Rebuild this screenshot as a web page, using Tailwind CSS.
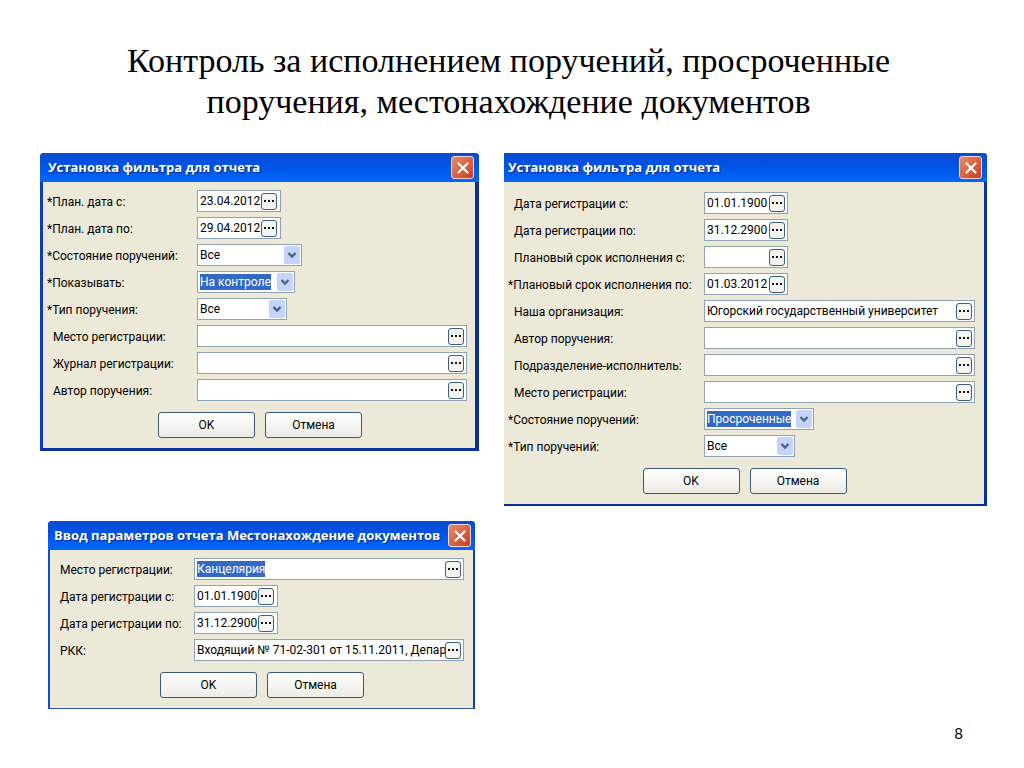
<!DOCTYPE html>
<html lang="ru">
<head>
    <meta charset="UTF-8">
    <title>Контроль за исполнением поручений</title>
    <meta name="viewport" content="width=device-width, initial-scale=1.0">
    <script src="https://cdn.jsdelivr.net/npm/@tailwindcss/browser@4"></script>
</head>
<body class="bg-white min-h-screen flex flex-col text-black text-[12px] font-['Roboto','DejaVu_Sans_Condensed',sans-serif]">

<!-- shared icons -->
<svg class="hidden">
    <symbol id="dots" viewBox="0 0 12 12"><path d="M1 5h2v2H1zM5 5h2v2H5zM9 5h2v2H9z" fill="#111"/></symbol>
    <symbol id="chevron" viewBox="0 0 12 12"><path d="M2.5 4L6 7.5 9.5 4" fill="none" stroke="#4d6185" stroke-width="2.4"/></symbol>
    <symbol id="cross" viewBox="0 0 16 16"><path d="M3.5 3.5l9 9M12.5 3.5l-9 9" fill="none" stroke="#fff" stroke-width="2.2" stroke-linecap="round"/></symbol>
</svg>

<h1 class="pt-10 px-24 pr-[103px] text-center text-[34px] leading-[41px] font-['Liberation_Serif',serif]">Контроль за исполнением поручений, просроченные поручения, местонахождение документов</h1>

<main class="grow pt-[31px] pl-10 pr-[37px] grid grid-cols-[439fr_483fr] gap-x-[25px] items-start">

    <div class="flex flex-col gap-[70px]">
        <section class="border-l-3 border-r-4 border-b-3 border-[#0b3bc4] border-r-[#0a2f9e] border-b-[#0a2f9e] rounded-t-sm bg-[#ece9d8]">
            <header class="-ml-[3px] -mr-1 h-[29px] pl-2 pr-[5px] flex items-center justify-between rounded-t-sm bg-linear-to-b from-[#0a4bd0] via-[#0054e9] to-[#0566fd]">
                <h2 class="text-white text-[13px] font-bold font-['Open_Sans',sans-serif] text-shadow-[1px_1px_1px_#0a2f7e]">Установка фильтра для отчета</h2>
                <button type="button" aria-label="Закрыть" class="size-[23px] grid place-items-center rounded-[3px] border border-[#f3d6d6] bg-linear-to-br from-[#e98a6a] to-[#c93a14]"><svg class="size-4"><use href="#cross"/></svg></button>
            </header>
            <form class="pt-2 pb-[10px] pl-[10px] pr-2">
                <div class="grid grid-cols-[144px_1fr] gap-y-[5px] items-center justify-items-start [&>label]:pt-0.5">
                    <label for="a1" class="-ml-[6px]">*План. дата с:</label>
                    <div class="w-[84px] h-[22px] pl-0.5 pr-[3px] flex items-center border border-[#8fa3b5] bg-white">
                        <input id="a1" value="23.04.2012" class="min-w-0 grow">
                        <button type="button" aria-label="Выбрать" class="shrink-0 w-4 h-[17px] grid place-items-center rounded-[3px] border border-[#3e5f7d] bg-[#f3f3ef]"><svg class="size-3"><use href="#dots"/></svg></button>
                    </div>
                    <label for="a2" class="-ml-[6px]">*План. дата по:</label>
                    <div class="w-[84px] h-[22px] pl-0.5 pr-[3px] flex items-center border border-[#8fa3b5] bg-white">
                        <input id="a2" value="29.04.2012" class="min-w-0 grow">
                        <button type="button" aria-label="Выбрать" class="shrink-0 w-4 h-[17px] grid place-items-center rounded-[3px] border border-[#3e5f7d] bg-[#f3f3ef]"><svg class="size-3"><use href="#dots"/></svg></button>
                    </div>
                    <label for="a3" class="-ml-[6px]">*Состояние поручений:</label>
                    <div class="w-[105px] h-[22px] pl-0.5 pr-px flex items-center justify-between border border-[#8fa3b5] bg-white">
                        <select id="a3" class="appearance-none grow"><option>Все</option></select>
                        <span class="w-4 h-[18px] grid place-items-center rounded-xs bg-[#c3d3fb] pointer-events-none"><svg class="size-3"><use href="#chevron"/></svg></span>
                    </div>
                    <label for="a4" class="-ml-[6px]">*Показывать:</label>
                    <div class="w-[98px] h-[22px] pl-0.5 pr-px flex items-center justify-between border border-[#8fa3b5] bg-white">
                        <select id="a4" class="appearance-none field-sizing-content h-4 leading-4 bg-[#316ac5] text-white"><option>На контроле</option></select>
                        <span class="w-4 h-[18px] grid place-items-center rounded-xs bg-[#c3d3fb] pointer-events-none"><svg class="size-3"><use href="#chevron"/></svg></span>
                    </div>
                    <label for="a5" class="-ml-[6px]">*Тип поручения:</label>
                    <div class="w-[90px] h-[22px] pl-0.5 pr-px flex items-center justify-between border border-[#8fa3b5] bg-white">
                        <select id="a5" class="appearance-none grow"><option>Все</option></select>
                        <span class="w-4 h-[18px] grid place-items-center rounded-xs bg-[#c3d3fb] pointer-events-none"><svg class="size-3"><use href="#chevron"/></svg></span>
                    </div>
                    <label for="a6">Место регистрации:</label>
                    <div class="w-full h-[22px] pl-0.5 pr-[2px] flex items-center border border-[#8fa3b5] bg-white">
                        <input id="a6" class="min-w-0 grow">
                        <button type="button" aria-label="Выбрать" class="shrink-0 w-4 h-[17px] grid place-items-center rounded-[3px] border border-[#3e5f7d] bg-[#f3f3ef]"><svg class="size-3"><use href="#dots"/></svg></button>
                    </div>
                    <label for="a7">Журнал регистрации:</label>
                    <div class="w-full h-[22px] pl-0.5 pr-[2px] flex items-center border border-[#8fa3b5] bg-white">
                        <input id="a7" class="min-w-0 grow">
                        <button type="button" aria-label="Выбрать" class="shrink-0 w-4 h-[17px] grid place-items-center rounded-[3px] border border-[#3e5f7d] bg-[#f3f3ef]"><svg class="size-3"><use href="#dots"/></svg></button>
                    </div>
                    <label for="a8">Автор поручения:</label>
                    <div class="w-full h-[22px] pl-0.5 pr-[2px] flex items-center border border-[#8fa3b5] bg-white">
                        <input id="a8" class="min-w-0 grow">
                        <button type="button" aria-label="Выбрать" class="shrink-0 w-4 h-[17px] grid place-items-center rounded-[3px] border border-[#3e5f7d] bg-[#f3f3ef]"><svg class="size-3"><use href="#dots"/></svg></button>
                    </div>
                </div>
                <div class="mt-[11px] flex justify-center gap-[10px]">
                    <button type="submit" class="w-[97px] h-[26px] rounded-[3px] border border-[#3b5a78] bg-linear-to-b from-white to-[#ecebe6]">OK</button>
                    <button type="button" class="w-[97px] h-[26px] rounded-[3px] border border-[#3b5a78] bg-linear-to-b from-white to-[#ecebe6]">Отмена</button>
                </div>
            </form>
        </section>

        <section class="ml-2 mr-1 border-x-2 border-b border-[#0b4fd0] border-r-[#0a3fae] border-b-[#2c5a9e] rounded-t-sm bg-[#ece9d8]">
            <header class="-mx-0.5 h-[29px] pl-[6px] pr-1 flex items-center justify-between rounded-t-sm bg-linear-to-b from-[#0a4bd0] via-[#0054e9] to-[#0566fd]">
                <h2 class="text-white text-[13px] font-bold font-['Open_Sans',sans-serif] text-shadow-[1px_1px_1px_#0a2f7e]">Ввод параметров отчета Местонахождение документов</h2>
                <button type="button" aria-label="Закрыть" class="size-[23px] grid place-items-center rounded-[3px] border border-[#f3d6d6] bg-linear-to-br from-[#e98a6a] to-[#c93a14]"><svg class="size-4"><use href="#cross"/></svg></button>
            </header>
            <form class="pt-2 pb-[10px] pl-[10px] pr-[9px]">
                <div class="grid grid-cols-[134px_1fr] gap-y-[5px] items-center justify-items-start [&>label]:pt-0.5">
                    <label for="b1">Место регистрации:</label>
                    <div class="w-full h-[22px] pl-0.5 pr-[2px] flex items-center justify-between border border-[#8fa3b5] bg-white">
                        <input id="b1" value="Канцелярия" class="field-sizing-content h-4 leading-4 bg-[#316ac5] text-white">
                        <button type="button" aria-label="Выбрать" class="shrink-0 w-4 h-[17px] grid place-items-center rounded-[3px] border border-[#3e5f7d] bg-[#f3f3ef]"><svg class="size-3"><use href="#dots"/></svg></button>
                    </div>
                    <label for="b2">Дата регистрации с:</label>
                    <div class="w-[84px] h-[22px] pl-0.5 pr-[3px] flex items-center border border-[#8fa3b5] bg-white">
                        <input id="b2" value="01.01.1900" class="min-w-0 grow">
                        <button type="button" aria-label="Выбрать" class="shrink-0 w-4 h-[17px] grid place-items-center rounded-[3px] border border-[#3e5f7d] bg-[#f3f3ef]"><svg class="size-3"><use href="#dots"/></svg></button>
                    </div>
                    <label for="b3">Дата регистрации по:</label>
                    <div class="w-[84px] h-[22px] pl-0.5 pr-[3px] flex items-center border border-[#8fa3b5] bg-white">
                        <input id="b3" value="31.12.2900" class="min-w-0 grow">
                        <button type="button" aria-label="Выбрать" class="shrink-0 w-4 h-[17px] grid place-items-center rounded-[3px] border border-[#3e5f7d] bg-[#f3f3ef]"><svg class="size-3"><use href="#dots"/></svg></button>
                    </div>
                    <label for="b4">РКК:</label>
                    <div class="w-full h-[22px] pl-0.5 pr-[2px] flex items-center border border-[#8fa3b5] bg-white">
                        <input id="b4" value="Входящий № 71-02-301 от 15.11.2011, Департамент" class="min-w-0 grow">
                        <button type="button" aria-label="Выбрать" class="shrink-0 w-4 h-[17px] grid place-items-center rounded-[3px] border border-[#3e5f7d] bg-[#f3f3ef]"><svg class="size-3"><use href="#dots"/></svg></button>
                    </div>
                </div>
                <div class="mt-[11px] flex justify-center gap-[10px]">
                    <button type="submit" class="w-[97px] h-[26px] rounded-[3px] border border-[#3b5a78] bg-linear-to-b from-white to-[#ecebe6]">OK</button>
                    <button type="button" class="w-[97px] h-[26px] rounded-[3px] border border-[#3b5a78] bg-linear-to-b from-white to-[#ecebe6]">Отмена</button>
                </div>
            </form>
        </section>
    </div>

    <section class="border-r-3 border-b-2 border-[#0a2f9e] rounded-tr-sm bg-[#ece9d8]">
        <header class="-mr-[3px] h-[29px] pl-1 pr-[5px] flex items-center justify-between rounded-tr-sm bg-linear-to-b from-[#0a4bd0] via-[#0054e9] to-[#0566fd]">
            <h2 class="text-white text-[13px] font-bold font-['Open_Sans',sans-serif] text-shadow-[1px_1px_1px_#0a2f7e]">Установка фильтра для отчета</h2>
            <button type="button" aria-label="Закрыть" class="size-[23px] grid place-items-center rounded-[3px] border border-[#f3d6d6] bg-linear-to-br from-[#e98a6a] to-[#c93a14]"><svg class="size-4"><use href="#cross"/></svg></button>
        </header>
        <form class="pt-[10px] pb-[10px] pl-[10px] pr-[9px]">
            <div class="grid grid-cols-[190px_1fr] gap-y-[5px] items-center justify-items-start [&>label]:pt-0.5">
                <label for="c1">Дата регистрации с:</label>
                <div class="w-[84px] h-[22px] pl-0.5 pr-[2px] flex items-center border border-[#8fa3b5] bg-white">
                    <input id="c1" value="01.01.1900" class="min-w-0 grow">
                    <button type="button" aria-label="Выбрать" class="shrink-0 w-4 h-[17px] grid place-items-center rounded-[3px] border border-[#3e5f7d] bg-[#f3f3ef]"><svg class="size-3"><use href="#dots"/></svg></button>
                </div>
                <label for="c2">Дата регистрации по:</label>
                <div class="w-[84px] h-[22px] pl-0.5 pr-[2px] flex items-center border border-[#8fa3b5] bg-white">
                    <input id="c2" value="31.12.2900" class="min-w-0 grow">
                    <button type="button" aria-label="Выбрать" class="shrink-0 w-4 h-[17px] grid place-items-center rounded-[3px] border border-[#3e5f7d] bg-[#f3f3ef]"><svg class="size-3"><use href="#dots"/></svg></button>
                </div>
                <label for="c3">Плановый срок исполнения с:</label>
                <div class="w-[84px] h-[22px] pl-0.5 pr-[2px] flex items-center border border-[#8fa3b5] bg-white">
                    <input id="c3" class="min-w-0 grow">
                    <button type="button" aria-label="Выбрать" class="shrink-0 w-4 h-[17px] grid place-items-center rounded-[3px] border border-[#3e5f7d] bg-[#f3f3ef]"><svg class="size-3"><use href="#dots"/></svg></button>
                </div>
                <label for="c4" class="-ml-[6px]">*Плановый срок исполнения по:</label>
                <div class="w-[84px] h-[22px] pl-0.5 pr-[2px] flex items-center border border-[#8fa3b5] bg-white">
                    <input id="c4" value="01.03.2012" class="min-w-0 grow">
                    <button type="button" aria-label="Выбрать" class="shrink-0 w-4 h-[17px] grid place-items-center rounded-[3px] border border-[#3e5f7d] bg-[#f3f3ef]"><svg class="size-3"><use href="#dots"/></svg></button>
                </div>
                <label for="c5">Наша организация:</label>
                <div class="w-full h-[22px] pl-0.5 pr-[2px] flex items-center border border-[#8fa3b5] bg-white">
                    <input id="c5" value="Югорский государственный университет" class="min-w-0 grow">
                    <button type="button" aria-label="Выбрать" class="shrink-0 w-4 h-[17px] grid place-items-center rounded-[3px] border border-[#3e5f7d] bg-[#f3f3ef]"><svg class="size-3"><use href="#dots"/></svg></button>
                </div>
                <label for="c6">Автор поручения:</label>
                <div class="w-full h-[22px] pl-0.5 pr-[2px] flex items-center border border-[#8fa3b5] bg-white">
                    <input id="c6" class="min-w-0 grow">
                    <button type="button" aria-label="Выбрать" class="shrink-0 w-4 h-[17px] grid place-items-center rounded-[3px] border border-[#3e5f7d] bg-[#f3f3ef]"><svg class="size-3"><use href="#dots"/></svg></button>
                </div>
                <label for="c7">Подразделение-исполнитель:</label>
                <div class="w-full h-[22px] pl-0.5 pr-[2px] flex items-center border border-[#8fa3b5] bg-white">
                    <input id="c7" class="min-w-0 grow">
                    <button type="button" aria-label="Выбрать" class="shrink-0 w-4 h-[17px] grid place-items-center rounded-[3px] border border-[#3e5f7d] bg-[#f3f3ef]"><svg class="size-3"><use href="#dots"/></svg></button>
                </div>
                <label for="c8">Место регистрации:</label>
                <div class="w-full h-[22px] pl-0.5 pr-[2px] flex items-center border border-[#8fa3b5] bg-white">
                    <input id="c8" class="min-w-0 grow">
                    <button type="button" aria-label="Выбрать" class="shrink-0 w-4 h-[17px] grid place-items-center rounded-[3px] border border-[#3e5f7d] bg-[#f3f3ef]"><svg class="size-3"><use href="#dots"/></svg></button>
                </div>
                <label for="c9" class="-ml-[6px]">*Состояние поручений:</label>
                <div class="w-[110px] h-[22px] pl-0.5 pr-px flex items-center justify-between border border-[#8fa3b5] bg-white">
                    <select id="c9" class="appearance-none field-sizing-content h-4 leading-4 bg-[#316ac5] text-white"><option>Просроченные</option></select>
                    <span class="w-4 h-[18px] grid place-items-center rounded-xs bg-[#c3d3fb] pointer-events-none"><svg class="size-3"><use href="#chevron"/></svg></span>
                </div>
                <label for="c10" class="-ml-[6px]">*Тип поручений:</label>
                <div class="w-[91px] h-[22px] pl-0.5 pr-px flex items-center justify-between border border-[#8fa3b5] bg-white">
                    <select id="c10" class="appearance-none grow"><option>Все</option></select>
                    <span class="w-4 h-[18px] grid place-items-center rounded-xs bg-[#c3d3fb] pointer-events-none"><svg class="size-3"><use href="#chevron"/></svg></span>
                </div>
            </div>
            <div class="mt-[11px] flex justify-center gap-[10px]">
                <button type="submit" class="w-[97px] h-[26px] rounded-[3px] border border-[#3b5a78] bg-linear-to-b from-white to-[#ecebe6]">OK</button>
                <button type="button" class="w-[97px] h-[26px] rounded-[3px] border border-[#3b5a78] bg-linear-to-b from-white to-[#ecebe6]">Отмена</button>
            </div>
        </form>
    </section>
</main>

<footer class="pb-6 pr-[61px] text-right text-[15px] leading-[22px] font-['Lato',sans-serif]">8</footer>

</body>
</html>
